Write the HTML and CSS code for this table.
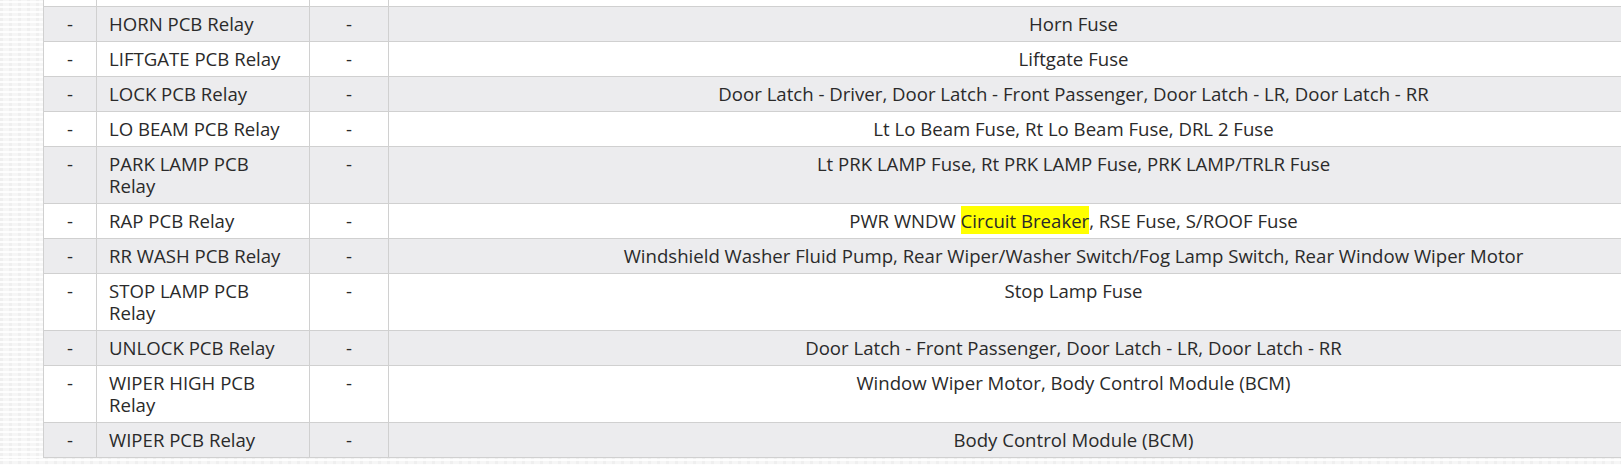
FILE: index.html
```html
<!DOCTYPE html>
<html lang="en">
<head>
<meta charset="utf-8">
<title>Relay table</title>
<link rel="stylesheet" href="styles.css">
</head>
<body>
<div class="page">
  <table class="relays">
    <colgroup>
      <col class="c-num">
      <col class="c-name">
      <col class="c-loc">
      <col class="c-circ">
    </colgroup>
    <tbody>
      <tr class="cut"><td></td><td></td><td></td><td></td></tr>
      <tr class="alt"><td class="ctr">-</td><td>HORN PCB Relay</td><td class="ctr">-</td><td class="ctr">Horn Fuse</td></tr>
      <tr><td class="ctr">-</td><td>LIFTGATE PCB Relay</td><td class="ctr">-</td><td class="ctr">Liftgate Fuse</td></tr>
      <tr class="alt"><td class="ctr">-</td><td>LOCK PCB Relay</td><td class="ctr">-</td><td class="ctr">Door Latch - Driver, Door Latch - Front Passenger, Door Latch - LR, Door Latch - RR</td></tr>
      <tr><td class="ctr">-</td><td>LO BEAM PCB Relay</td><td class="ctr">-</td><td class="ctr">Lt Lo Beam Fuse, Rt Lo Beam Fuse, DRL 2 Fuse</td></tr>
      <tr class="alt"><td class="ctr">-</td><td>PARK LAMP PCB Relay</td><td class="ctr">-</td><td class="ctr">Lt PRK LAMP Fuse, Rt PRK LAMP Fuse, PRK LAMP/TRLR Fuse</td></tr>
      <tr><td class="ctr">-</td><td>RAP PCB Relay</td><td class="ctr">-</td><td class="ctr">PWR WNDW <mark class="hl">Circuit Breaker</mark>, RSE Fuse, S/ROOF Fuse</td></tr>
      <tr class="alt"><td class="ctr">-</td><td>RR WASH PCB Relay</td><td class="ctr">-</td><td class="ctr">Windshield Washer Fluid Pump, Rear Wiper/Washer Switch/Fog Lamp Switch, Rear Window Wiper Motor</td></tr>
      <tr><td class="ctr">-</td><td>STOP LAMP PCB Relay</td><td class="ctr">-</td><td class="ctr">Stop Lamp Fuse</td></tr>
      <tr class="alt"><td class="ctr">-</td><td>UNLOCK PCB Relay</td><td class="ctr">-</td><td class="ctr">Door Latch - Front Passenger, Door Latch - LR, Door Latch - RR</td></tr>
      <tr><td class="ctr">-</td><td>WIPER HIGH PCB Relay</td><td class="ctr">-</td><td class="ctr">Window Wiper Motor, Body Control Module (BCM)</td></tr>
      <tr class="alt"><td class="ctr">-</td><td>WIPER PCB Relay</td><td class="ctr">-</td><td class="ctr">Body Control Module (BCM)</td></tr>
    </tbody>
  </table>
</div>
</body>
</html>
```

FILE: styles.css
```css
html, body {
  margin: 0;
  padding: 0;
}
body {
  background-color: #f6f6f6;
  background-image:
    repeating-linear-gradient(0deg, rgba(255,255,255,0.9) 0 2px, transparent 2px 5px),
    repeating-linear-gradient(90deg, rgba(235,235,235,0.6) 0 3px, transparent 3px 9px);
  font-family: "Open Sans", "Noto Sans", sans-serif;
  color: #2a2a2a;
  overflow: hidden;
}
.page {
  padding-left: 43px;
  width: 1800px;
}
.relays {
  border-collapse: collapse;
  table-layout: fixed;
  width: 1716px;
  background: #ffffff;
  font-size: 18.6px;
  line-height: 22px;
}
.c-num { width: 53px; }
.c-name { width: 213px; }
.c-loc { width: 79px; }
.relays td {
  border: 1px solid #d0d0d0;
  padding: 6px 12px;
  vertical-align: top;
  text-align: left;
}
.relays td.ctr {
  text-align: center;
}
.relays tr.alt td {
  background: #ececee;
}
.relays tr.cut td {
  height: 6px;
  padding: 0;
  border-top: 0;
}
.hl {
  background: #ffff00;
  color: inherit;
  padding: 2px 0 1px;
}
```
